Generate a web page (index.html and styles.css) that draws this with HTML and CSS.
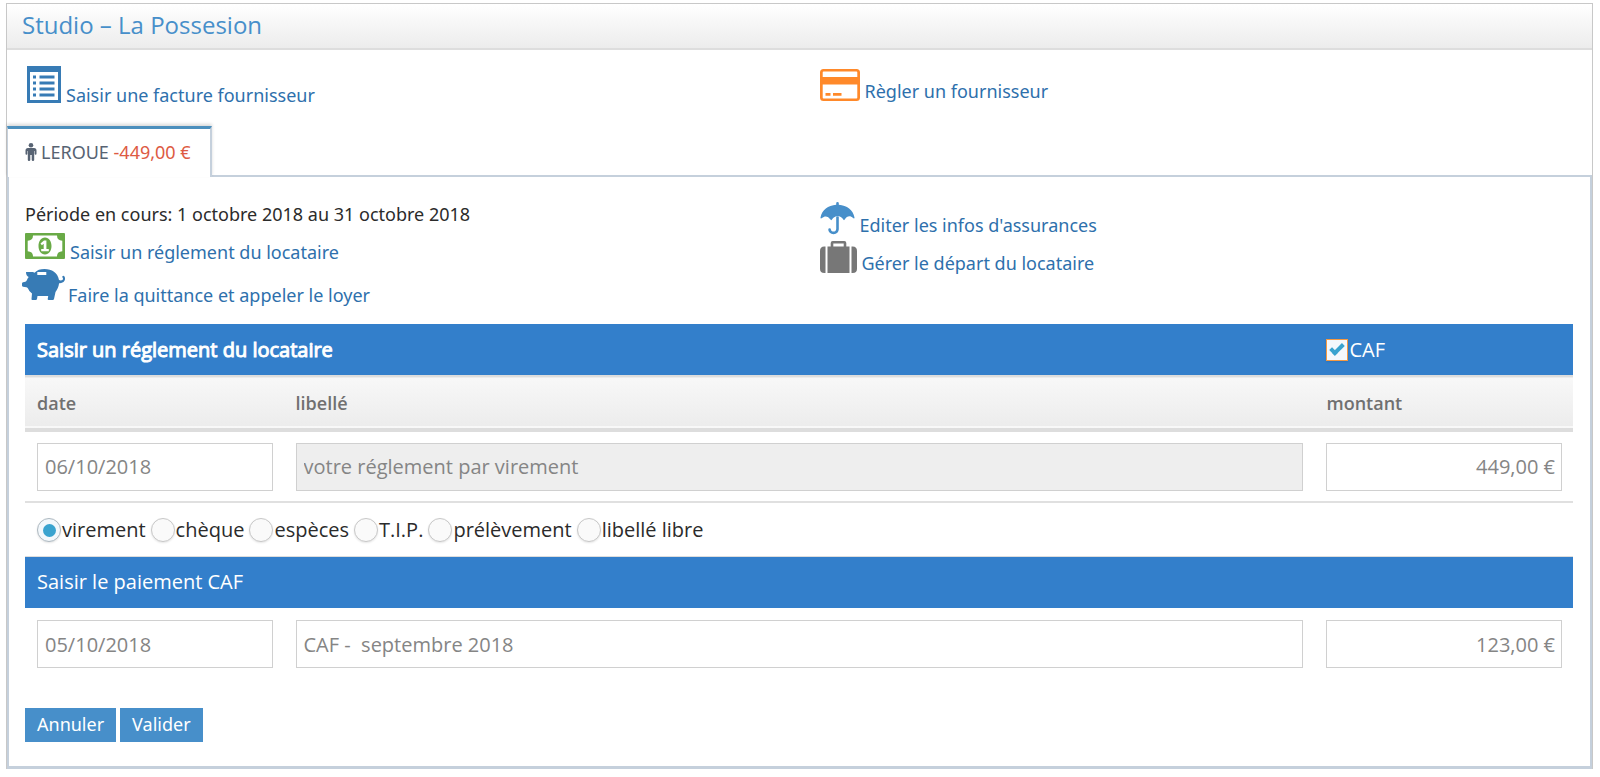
FILE: index.html
```html
<!DOCTYPE html>
<html lang="fr">
<head>
<meta charset="utf-8">
<title>Studio – La Possesion</title>
<link rel="stylesheet" href="styles.css">
</head>
<body>
<section class="widget">
  <header class="widget-header"><h1 class="widget-title">Studio – La Possesion</h1></header>

  <div class="columns supplier">
    <div class="column">
      <a class="action" href="#">
        <svg class="icon blue" width="36" height="36" viewBox="0 0 36 36" aria-hidden="true">
          <path fill-rule="evenodd" d="M2 0h34v37H2zM5 6v28h28V6z"/>
          <path d="M8 9.500h3v3H8zM8 15.500h3v3H8zM8 21.500h3v3H8zM8 27.500h3v3H8z"/>
          <path d="M14.500 9.500h15v3h-15zM14.500 15.500h15v3h-15zM14.500 21.500h15v3h-15zM14.500 27.500h15v3h-15z"/>
        </svg>
        <span>Saisir une facture fournisseur</span>
      </a>
    </div>
    <div class="column">
      <a class="action card" href="#">
        <svg class="icon orange" width="40" height="36" viewBox="0 0 40 36" aria-hidden="true">
          <path fill-rule="evenodd" d="M3.500 7h33Q40 7 40 10.500v25Q40 39 36.500 39h-33Q0 39 0 35.500v-25Q0 7 3.500 7zM3.500 9.500Q2.700 9.500 2.700 10.500V15h34.600v-4.500q0-1-.8-1zM2.700 22.500v13q0 1 .8 1h33q.8 0 .8-1v-13z"/>
          <path d="M5.500 31h5v2.700h-5zM13 31h8.500v2.700H13z"/>
        </svg>
        <span>Règler un fournisseur</span>
      </a>
    </div>
  </div>

  <nav class="tabs">
    <a class="tab" href="#locataire">
      <svg class="person" width="12" height="18" viewBox="0 0 12 18" aria-hidden="true">
        <circle cx="6" cy="2.300" r="2.300"/>
        <path d="M3 5h6q2.500 0 2.500 2.500v3.300q0 1-.9 1t-.9-1V8H9.200v9q0 1-1.200 1t-1.300-1v-5H5.300v5q0 1-1.300 1t-1.200-1V8H2.300v2.800q0 1-.9 1t-.9-1V7.500Q.5 5 3 5z"/>
      </svg>
      <span>LEROUE <span class="debt">-449,00 €</span></span>
    </a>
  </nav>

  <div class="pane" id="locataire">
    <div class="columns">
      <div class="column left">
        <p class="period">Période en cours: 1 octobre 2018 au 31 octobre 2018</p>
        <a class="action" href="#">
          <svg class="icon green" width="40" height="36" viewBox="0 0 40 36" aria-hidden="true">
            <path fill-rule="evenodd" d="M1 10h38q1 0 1 1v24q0 1-1 1H1q-1 0-1-1V11q0-1 1-1zM8 12.500q0 5-5.300 5.300v10.400q5.300.3 5.300 5.300h24q0-5 5.300-5.300V17.800Q32 17.500 32 12.500z"/>
            <path fill-rule="evenodd" d="M20 14.500c4 0 6.500 4 6.500 8.500s-2.500 8.500-6.500 8.500-6.500-4-6.500-8.500 2.500-8.500 6.500-8.500zM19 17.500l-3.500 3 1.400 1.700 1.800-1.400V26h-2.500v2.300h7.600V26h-2.400v-8.500z"/>
          </svg>
          <span>Saisir un réglement du locataire</span>
        </a>
        <a class="action" href="#">
          <svg class="icon blue" width="38" height="36" viewBox="0 0 38 36" aria-hidden="true">
            <path fill-rule="evenodd" d="M1 6h6.500q1.200 0 2 .7C12.500 4 15 3 19.500 3 27 3 32.500 6.500 34 14c2 1 4 .2 4-1.300 0-.8-.7-1-.7-1.900 0-1.200 1.500-1.300 2.200-.2 1.800 3.400-.9 7-5.400 6.600-.5 3.800-2 6.500-3.600 8.700L29 33q-.2 1-1.300 1h-4q-1.200 0-1-1l.5-3H12.500l-.5 3q-.2 1-1.300 1H7.500q-1.200 0-1-1L7 27.500Q4 25.500 3 22.500q-.4-1-1.500-1.200L-2 20.700q-1-.2-1-1.200v-2q0-1 1-1.300l2.300-.5q1-.3 1.500-1.500 1-2.400 1.900-3.200Q1 10 1 6zM12.300 6v3h9V6z"/>
          </svg>
          <span>Faire la quittance et appeler le loyer</span>
        </a>
      </div>
      <div class="column">
        <a class="action" href="#">
          <svg class="icon sky" width="35" height="36" viewBox="0 0 35 36" aria-hidden="true">
            <path d="M17.500 6q1.300 0 1.300 1.300v1.500C27 9.300 33 14 34.500 21.500q.2 1-.6 1-.4 0-.8-.4c-3-2.800-6-2.200-8.600 1.600q-.5.9-1 0c-3.400-5-8.200-5-11.700 0q-.6.9-1.100 0C8 20 5 19.300 1.900 22.100q-.4.400-.8.400-.8 0-.6-1C2 14 8 9.300 16.200 8.800V7.300Q16.200 6 17.500 6z"/>
            <path d="M16.200 20.500q1.300-.5 2.600 0V33c0 3-2.200 5.200-5.200 5.200S8.300 36 8.300 33.500q0-1.300 1.300-1.300t1.300 1.300c0 1.200 1.200 2.100 2.600 2.100s2.700-1 2.700-2.600z"/>
          </svg>
          <span>Editer les infos d'assurances</span>
        </a>
        <a class="action" href="#">
          <svg class="icon gray" width="37" height="36" viewBox="0 0 37 36" aria-hidden="true">
            <path d="M5.500 12.500V39H4.300Q0 39 0 34.700V17q0-4.500 4.300-4.500zM31.500 12.500V39h1.200q4.300 0 4.300-4.300V17q0-4.500-4.300-4.500z"/>
            <path fill-rule="evenodd" d="M7.500 12.500h3.200V9q0-2 2-2h11.600q2 0 2 2v3.500h3.200V39h-22zM13.300 9.500v3h10.400v-3z"/>
          </svg>
          <span>Gérer le départ du locataire</span>
        </a>
      </div>
    </div>

    <form class="payment">
      <table class="entries">
        <colgroup><col class="narrow"><col><col class="narrow"></colgroup>
        <tbody>
          <tr class="banner">
            <th colspan="2" class="strong">Saisir un réglement du locataire</th>
            <td><label class="choice"><input class="check" type="checkbox" checked>CAF</label></td>
          </tr>
          <tr class="heads"><th>date</th><th>libellé</th><th>montant</th></tr>
          <tr class="fields">
            <td><input class="field" type="text" aria-label="date" value="06/10/2018"></td>
            <td><input class="field locked" type="text" aria-label="libellé" value="votre réglement par virement" readonly></td>
            <td><input class="field amount" type="text" aria-label="montant" value="449,00 €"></td>
          </tr>
          <tr class="modes">
            <td colspan="3">
              <div class="choices">
                <label class="choice"><input class="radio" type="radio" name="mode" checked>virement</label>
                <label class="choice"><input class="radio" type="radio" name="mode">chèque</label>
                <label class="choice"><input class="radio" type="radio" name="mode">espèces</label>
                <label class="choice"><input class="radio" type="radio" name="mode">T.I.P.</label>
                <label class="choice"><input class="radio" type="radio" name="mode">prélèvement</label>
                <label class="choice"><input class="radio" type="radio" name="mode">libellé libre</label>
              </div>
            </td>
          </tr>
          <tr class="banner"><th colspan="3">Saisir le paiement CAF</th></tr>
          <tr class="fields">
            <td><input class="field" type="text" aria-label="date CAF" value="05/10/2018"></td>
            <td><input class="field" type="text" aria-label="libellé CAF" value="CAF -  septembre 2018"></td>
            <td><input class="field amount" type="text" aria-label="montant CAF" value="123,00 €"></td>
          </tr>
        </tbody>
      </table>
      <div class="buttons">
        <button class="button" type="button">Annuler</button>
        <button class="button" type="button">Valider</button>
      </div>
    </form>
  </div>
</section>
</body>
</html>
```
FILE: styles.css
```css
* { box-sizing: border-box; }

body {
  margin: 0;
  padding: 3px 7px 10px 6px;
  background: #fff;
  color: #2b2b2b;
  font-family: "Noto Sans", "Open Sans", sans-serif;
  font-size: 18px;
  line-height: 26px;
}

.widget { border: 1px solid #c8c8c8; border-bottom: 0; }

.widget-header {
  padding: 4px 15px 6px;
  border-bottom: 2px solid #ddd;
  background: linear-gradient(#fff, #ececec);
}

.widget-title {
  margin: 0;
  color: #478fca;
  font-family: "Open Sans", sans-serif;
  font-size: 24px;
  font-weight: 400;
  line-height: 34px;
}

.columns { display: grid; grid-template-columns: 1fr 1fr; column-gap: 4px; }
.column { padding-left: 18px; }
.supplier { padding: 16px 0 22px; }

.action {
  display: flex;
  align-items: baseline;
  gap: 5px;
  height: 38px;
  color: #2e70ac;
  text-decoration: none;
}

.card { margin-top: -4px; }
.icon { flex: none; overflow: visible; fill: currentColor; }
.blue { color: #377bb5; }
.sky { color: #478fca; }
.orange { color: #ff892a; }
.green { color: #69aa46; }
.gray { color: #777; }

.tabs { display: flex; }

.tab {
  z-index: 1;
  display: flex;
  align-items: center;
  gap: 4px;
  margin-bottom: -2px;
  padding: 10px 19px 12px 17px;
  border: solid #c5d0dc;
  border-width: 0 2px 0 1px;
  border-top: 3px solid #4c8fbd;
  background: #fff;
  box-shadow: 0 -2px 3px rgba(0, 0, 0, 0.15);
  color: #576373;
  text-decoration: none;
}

.person { fill: currentColor; }
.debt { color: #dd5a43; }

.pane {
  padding: 19px 0 24px;
  border: 2px solid #c5d0dc;
  border-bottom-width: 3px;
}

.pane .column { padding-left: 18px; }
.pane .left { display: flex; flex-direction: column; gap: 5px; padding-left: 16px; }
.period { margin: 8px 0 -6px; line-height: 20px; }

.payment {
  padding: 20px 17px 0 16px;
  font-family: "Open Sans", sans-serif;
  font-size: 20px;
}

.entries { width: 100%; border-collapse: collapse; table-layout: fixed; }
.narrow { width: 16.7%; }
.entries th, .entries td { padding: 0 11px 0 12px; text-align: left; font-weight: 400; }

.banner { height: 52px; background: #337fcb; color: #fff; }
.banner .strong { -webkit-text-stroke: 1px #fff; }

.heads {
  height: 54px;
  border-top: 2px solid #ddd;
  border-bottom: 4px solid #ddd;
  background: linear-gradient(#f8f8f8, #ececec);
  color: #707070;
  font-size: 18px;
}

.entries .heads th { font-weight: 600; }

.fields { height: 72px; }
.modes { height: 54px; border-top: 2px solid #e0e0e0; border-bottom: 1px solid #ddd; }

.field {
  display: block;
  width: 100%;
  height: 48px;
  padding: 0 7px;
  border: 1px solid #d0d0d0;
  border-radius: 0;
  background: #fff;
  color: #858585;
  font: inherit;
}

.locked { background: #eee; }
.amount { padding-right: 6px; text-align: right; }

.choices { display: flex; gap: 5px; padding-top: 2px; }
.choice { display: flex; align-items: center; gap: 1px; }

.radio, .check {
  appearance: none;
  display: grid;
  place-items: center;
  flex: none;
  margin: 0;
  border: 1px solid #c8c8c8;
  background: #fafafa;
  box-shadow: 0 1px 2px rgba(0, 0, 0, 0.1);
}

.radio { width: 24px; height: 24px; border-radius: 50%; }
.radio:checked { border-color: #adb8c0; background: #f3f8fc; }
.radio:checked::after { width: 13px; height: 13px; border-radius: 50%; background: #3aa3cf; content: ""; }

.check { width: 22px; height: 22px; border-color: #f59942; background: #f5f8fc; }
.check:checked::after {
  box-sizing: border-box;
  width: 14px;
  height: 8px;
  margin-bottom: 4px;
  border: solid #3aa3cf;
  border-width: 0 0 4px 4px;
  content: "";
  transform: rotate(-45deg);
}

.buttons { display: flex; gap: 4px; margin-top: 28px; }

.button {
  padding: 3px 12px 4px;
  border: 0;
  background: #478fca;
  color: #fff;
  font-family: "Noto Sans", "Open Sans", sans-serif;
  font-size: 18px;
  line-height: 27px;
}
```
